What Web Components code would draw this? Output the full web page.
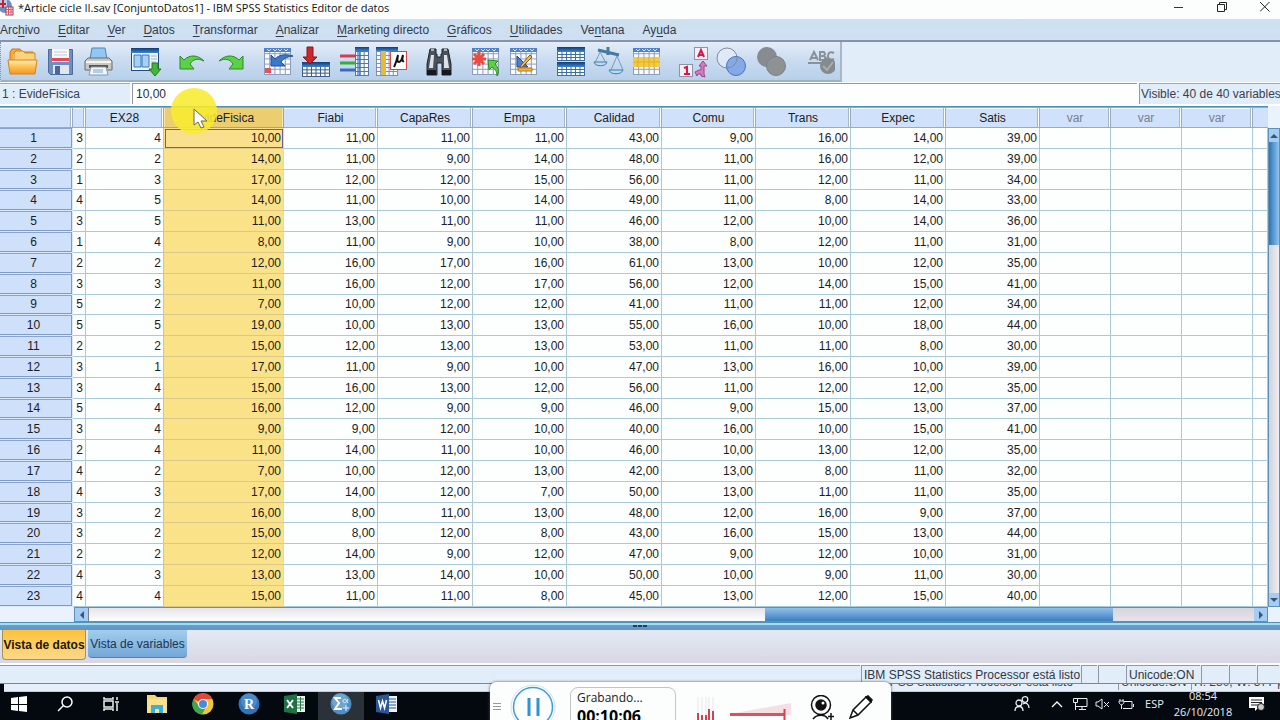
<!DOCTYPE html>
<html lang="es">
<head>
<meta charset="utf-8">
<title>*Article cicle II.sav [ConjuntoDatos1] - IBM SPSS Statistics Editor de datos</title>
<style>
html,body{height:100%;margin:0}
body{overflow:hidden;background:#fcfefd;color:#1a1d24;font:12px/16px "Liberation Sans",Arial,sans-serif}
</style>
</head>
<body>
<spss-window></spss-window>
<script>
const RESET = `*{box-sizing:border-box}button,input{font:inherit;color:inherit;margin:0;padding:0;border:0;background:none}svg{display:block}`;
function define(name, css, html, init) {
  customElements.define(name, class extends HTMLElement {
    constructor() {
      super();
      const root = this.attachShadow({mode: 'open'});
      root.innerHTML = `<style>${RESET}${css}</style>${typeof html === 'function' ? html(this) : html}`;
      if (init) init(root, this);
    }
  });
}

/* ---------- title bar ---------- */
define('title-bar', `
:host{display:flex;align-items:center;height:19px;background:#fcfefd;font:11px/16px "Open Sans","Noto Sans",sans-serif;color:#111}
h1{flex:1;margin:0;padding:0 0 3px 4px;font:inherit;white-space:nowrap}
.logo{width:14px;height:19px}
button{width:43px;height:16px;display:grid;place-items:center;margin-bottom:5px}
nav{display:flex;margin-right:-6px}`, `
<svg class="logo" viewBox="0 0 14 19"><circle cx="5" cy="6" r="7" fill="#6d8fc0"/><path d="M0 0h7v7H0z" fill="#b9c8e2"/><path d="M0 4h6M3 0v8" stroke="#c4213d" stroke-width="2"/><rect x="6" y="7" width="7" height="8" fill="#fff" stroke="#b0304a"/><path d="M6 9.500h7M6 12h7M8.500 7v8M11 7v8" stroke="#d0556b"/></svg>
<h1>*Article cicle II.sav [ConjuntoDatos1] - IBM SPSS Statistics Editor de datos</h1>
<nav>
<button aria-label="Minimizar"><svg width="10" height="10"><path d="M0 5.500h9" stroke="#333"/></svg></button>
<button aria-label="Restaurar"><svg width="10" height="10" fill="none" stroke="#222"><path d="M.5 2.500h7v7h-7zM2.500 2.500v-2h7v7h-2"/></svg></button>
<button aria-label="Cerrar"><svg width="10" height="10"><path d="M0 0l9.500 9.500M9.500 0L0 9.500" stroke="#222"/></svg></button>
</nav>`);

/* ---------- menu bar ---------- */
define('menu-bar', `
:host{display:flex;height:23px;align-items:center;gap:18px;padding-left:0;background:linear-gradient(#cde1ee,#cfdff4);border-bottom:2px solid #8594a8;color:#333c4a}
u{text-decoration-thickness:1px;text-underline-offset:2px}
button{white-space:nowrap}`,
 ['Arc<u>h</u>ivo','<u>E</u>ditar','<u>V</u>er','<u>D</u>atos','<u>T</u>ransformar','<u>A</u>nalizar','<u>M</u>arketing directo','<u>G</u>ráficos','<u>U</u>tilidades','Ve<u>n</u>tana','Ay<u>u</u>da'].map(t=>`<button>${t}</button>`).join(''));

/* ---------- toolbar ---------- */
const gridLines = (x,y,w,h,nx,ny,c='#9aa8c4') => {
  let d='';
  for(let i=1;i<nx;i++) d+=`M${x+w*i/nx} ${y}v${h}`;
  for(let i=1;i<ny;i++) d+=`M${x} ${y+h*i/ny}h${w}`;
  return `<rect x="${x}" y="${y}" width="${w}" height="${h}" fill="#f8fbff" stroke="${c}"/><path d="${d}" stroke="${c}" fill="none"/>`;
};
const sheet = gridLines(2.5,2.5,26,26,5,5,'#8f9dbd') + `<path d="M2 2h27v4H2z" fill="#4f80d0"/><path d="M5 3l2 2 2-2M11 3l2 2 2-2M16 3l2 2 2-2M22 3l2 2 2-2" stroke="#dbe9ff" fill="none"/>`;
const band = (x,y,w,h) => `<rect x="${x}" y="${y}" width="${w}" height="${h}" fill="url(#navy)"/>`;
const ICONS = {
 Abrir:`<path d="M3 6l2-3h8l2 3h11v19H3z" fill="#f3a83b" stroke="#c9791b"/><path d="M6 8h21v8H6z" fill="#fff2c8"/><path d="M7 7l2-2h7l2 2h10v8H7z" fill="#fdd27a" stroke="#d18a2b"/><path d="M1 14h29l-2 14H3z" fill="url(#gold)" stroke="#d9821c"/>`,
 Guardar:`<path d="M3.500 3.500h24v25h-22l-2-2z" fill="#6f8fc0" stroke="#4d6a9b"/><path d="M7 3h17v13H7z" fill="#f6f8fb"/><path d="M7 12h17v3H7z" fill="#e14860"/><path d="M9 6h13M9 9h13" stroke="#c3cbd8"/><path d="M8 19h16v9H8z" fill="#dfe7f0"/><path d="M10 20h5v8h-5z" fill="#46689c"/>`,
 Imprimir:`<path d="M9 2h13l2 11H7z" fill="#8fc8f2" stroke="#5583b5"/><path d="M5 12h21l3 3v9H2v-9z" fill="#c8c8c4" stroke="#6b6b68"/><path d="M3 15h25v2H3z" fill="#f5f5f1"/><path d="M6 19h19v3H6z" fill="#55554f"/><path d="M8 21h15l2 8H6z" fill="#f3f7fb" stroke="#8b98a6"/><path d="M10 24h10M10 26h10" stroke="#6ba6dd"/>`,
 Recuperar:`<rect x="1.500" y="2.500" width="27" height="22" fill="#f1f7fe" stroke="#234a80"/>${band(1,2,28,5)}<path d="M4 9h7v12H4zM12 9h7v12h-7z" fill="#a6d0f4" stroke="#3a78b8"/><path d="M21 10h6M21 13h6M21 16h5" stroke="#9db6d0"/><path d="M22 17h6v6h3l-6 7-6-7h3z" fill="#45b537" stroke="#23791c"/>`,
 Deshacer:`<path d="M3 10l4 4c6-6 14-5 20 1-6-3-11-2-14 3l4 5H3z" fill="#5cd048" stroke="#2b8a24"/>`,
 Rehacer:`<path d="M28 10l-4 4C18 8 10 9 4 15c6-3 11-2 14 3l-4 5h14z" fill="#5cd048" stroke="#2b8a24"/>`,
 'Ir a caso':`${sheet}<path d="M3 22h6v5H3z" fill="#e0525f"/><path d="M9 9l4 4c5-5 11-5 18-3-7 1-10 3-12 6l4 4H9z" fill="#3a78c8" stroke="#205398"/>`,
 'Ir a variable':`${gridLines(2.500,20.500,27,10,6,3,'#3f5d86')}${band(2,16,28,5)}<path d="M7 1h6v10h4l-7 7-7-7h4z" fill="#c6282c" stroke="#8d1418"/>`,
 Variables:`${gridLines(17.500,1.500,13,28,3,7,'#5a789f')}${band(17,1,14,4)}<path d="M19 5h4v24h-4z" fill="#3577bd" opacity=".6"/><path d="M2 10h16" stroke="#d63b54" stroke-width="3"/><path d="M2 17h16" stroke="#36ad3c" stroke-width="3"/><path d="M2 24h16" stroke="#3f66d0" stroke-width="3"/>`,
 Estadísticos:`${gridLines(.5,1.500,21,28,5,7,'#7d90ad')}${band(0,1,22,4)}<path d="M5 5h5v24H5z" fill="#e6b93f"/><rect x="14.500" y="5.500" width="16" height="18" fill="#fff" stroke="#d2493f"/><path d="M18 21c2-4 3-8 4-12-1 5-1 7 1 7s3-3 4-7c-1 5-1 7 1 6" stroke="#111" stroke-width="2" fill="none"/>`,
 Buscar:`<path d="M7 3h6v5h1v3h4V8h1V3h6l3 15v11h-9V17h-5v12H4V18z" fill="#4a525c" stroke="#20252b"/><path d="M8 9h3l-1 13H6zM21 9h3l2 13h-5z" fill="#dce2e8"/><path d="M4 24h9v5H4zM19 24h9v5h-9z" fill="#15181c"/><path d="M8 4h3M21 4h3" stroke="#aab4be" stroke-width="2"/>`,
 'Insertar caso':`${sheet}<path d="M9 6v14M2 13h14M4 8l10 10M14 8L4 18" stroke="#ea4c44" stroke-width="3"/><path d="M18 14l10 1-3 3c4 4 4 8 2 12 0-5-2-7-5-9l-3 3z" fill="#5cd048" stroke="#2b8a24"/>`,
 'Insertar variable':`${sheet}<path d="M9 10l11 11H9z" fill="#4c7fd0" stroke="#244a94"/><path d="M24 11L14 21l-2 1 1-3 9-10z" fill="#f1bd4c" stroke="#8a5a20"/><path d="M10 22h14v3H10z" fill="#f3b53a" stroke="#b77818"/>`,
 'Segmentar archivo':`${gridLines(2.500,5.500,27,9,6,3,'#3f6f9c')}${band(2,1,28,5)}${gridLines(2.500,20.500,27,9,6,3,'#3f6f9c')}${band(2,16,28,5)}`,
 Ponderar:`<path d="M5 4l21 5M15 1v8" stroke="#45799f" stroke-width="3"/><path d="M7 6L2 17M7 6l6 11M24 10l-6 14M24 10l6 14" stroke="#6f9fc0" fill="none"/><path d="M1 16h13c-1 5-12 5-13 0zM16 24h14c-1 5-13 5-14 0z" fill="#b6dcf5" stroke="#427ca8"/>`,
 Seleccionar:`${sheet}<path d="M2 11h27v10H2z" fill="#f2cb42"/><path d="M2 16h27M7 11v10M13 11v10M18 11v10M23 11v10" stroke="#dcae2b"/>`,
 Etiquetas:`<rect x="16.500" y="1.500" width="13" height="12" fill="#f5eef4" stroke="#8d93a8"/><path d="M20 11l3-7 3 7M21 9h4" stroke="#d11a4e" stroke-width="2" fill="none"/><rect x="1.500" y="18.500" width="13" height="12" fill="#f5eef4" stroke="#8d93a8"/><path d="M6 22l3-1v7M6 28h6" stroke="#d11a4e" stroke-width="2" fill="none"/><path d="M25 15l4 5h-3v8l1 3-4-1v-2h-3l-1 2-2-4 4-2h2v-4h-2z" fill="#d77bbd" stroke="#a04387"/>`,
 Conjuntos:`<circle cx="11" cy="12" r="10" fill="#e6eef8" fill-opacity=".7" stroke="#7d8ba3"/><circle cx="20" cy="20" r="9.500" fill="#85a9e6" stroke="#4a72c0"/><path d="M11 22a10 10 0 0 0 10-10" stroke="#7d8ba3" fill="none"/>`,
 'Todas las variables':`<circle cx="13" cy="11" r="10" fill="#878c90"/><circle cx="22" cy="20" r="9.500" fill="#8e9294" stroke="#7b8084"/>`,
 Ortografía:`<g fill="none" stroke="#8b9198" stroke-width="2"><path d="M7 14l4-8 4 8M8 12h6M17 14V6h4l1 2-1 2h-4 4l2 2-2 2zM31 7c-4-2-6 0-6 3s2 5 6 3M5 17h14"/></g><circle cx="25" cy="20" r="8" fill="#858a8e"/><path d="M20 20l4 4 6-8" stroke="#a9adb0" stroke-width="2" fill="none"/>`
};
const GROUPS = [['Abrir','Guardar','Imprimir'],['Recuperar'],['Deshacer','Rehacer'],['Ir a caso','Ir a variable','Variables','Estadísticos'],['Buscar'],['Insertar caso','Insertar variable'],['Segmentar archivo','Ponderar','Seleccionar'],['Etiquetas','Conjuntos','Todas las variables'],['Ortografía']];
const DEFS = `<defs><linearGradient id="navy" x2="0" y2="1"><stop stop-color="#123a78"/><stop offset="1" stop-color="#3d86cc"/></linearGradient><linearGradient id="gold" x2="0" y2="1"><stop stop-color="#fff0b8"/><stop offset=".5" stop-color="#fdc04e"/><stop offset="1" stop-color="#f79425"/></linearGradient></defs>`;
define('tool-bar', `
:host{display:flex;height:41px;background:#e2edfa;border-bottom:1px solid #fcfefd}
.strip{display:flex;gap:9px;padding:2px 4px 0 3px;align-items:center;border-right:2px solid #a8b6c8;border-bottom:2px solid #9cb0c8;border-left:1px dotted #7d93b0;background:linear-gradient(#e4edf8,#c9dbf0 50%,#b7d0ea)}
.group{display:flex}
.group:last-child{padding-left:3px}
.group:last-child button{width:35px}
button{width:38px;height:34px;display:grid;place-items:center}`,
 `<div class="strip">${GROUPS.map(g=>`<div class="group">${g.map(n=>`<button aria-label="${n}"><svg width="32" height="32" viewBox="0 0 32 32">${DEFS}${ICONS[n]}</svg></button>`).join('')}</div>`).join('')}</div>`);

/* ---------- cell editor ---------- */
define('cell-editor', `
:host{display:flex;height:23px;background:#fcfefd;gap:2px;padding-bottom:2px}
label,output{display:flex;align-items:center;background:#e2edfa;border-top:1px solid #9aa9bb;padding-left:2px;white-space:nowrap;color:#39414d}
label{width:130px}
input{flex:1;min-width:0;background:#fdfefe;border:solid #8c9bae;border-width:1px 0 0 1px;padding-left:3px;color:#2a2f38}
output{width:141px;border-left:1px solid #8c9bae;padding-left:1px}`, `
<label for="v">1 : EvideFisica</label><input id="v" value="10,00"><output>Visible: 40 de 40 variables</output>`);

/* ---------- data grid ---------- */
const COLS = [['',13],['EX28',78],['EvideFisica',120],['Fiabi',94],['CapaRes',95],['Empa',94],['Calidad',95],['Comu',94],['Trans',95],['Expec',95],['Satis',94],['var',71],['var',71],['var',71]];
const ROWS = `3 4 10 11 11 11 43 9 16 14 39
2 2 14 11 9 14 48 11 16 12 39
1 3 17 12 12 15 56 11 12 11 34
4 5 14 11 10 14 49 11 8 14 33
3 5 11 13 11 11 46 12 10 14 36
1 4 8 11 9 10 38 8 12 11 31
2 2 12 16 17 16 61 13 10 12 35
3 3 11 16 12 17 56 12 14 15 41
5 2 7 10 12 12 41 11 11 12 34
5 5 19 10 13 13 55 16 10 18 44
2 2 15 12 13 13 53 11 11 8 30
3 1 17 11 9 10 47 13 16 10 39
3 4 15 16 13 12 56 11 12 12 35
5 4 16 12 9 9 46 9 15 13 37
3 4 9 9 12 10 40 16 10 15 41
2 4 11 14 11 10 46 10 13 12 35
4 2 7 10 12 13 42 13 8 11 32
4 3 17 14 12 7 50 13 11 11 35
3 2 16 8 11 13 48 12 16 9 37
3 2 15 8 12 8 43 16 15 13 44
2 2 12 14 9 12 47 9 12 10 31
4 3 13 13 14 10 50 10 9 11 30
4 4 15 11 11 8 45 13 12 15 40`.split('\n').map(r=>r.split(' '));
define('data-grid', `
:host{display:block;min-height:0;border-top:1px solid #4f8fb0;background:#fdfefe}
table{width:100%;height:100%;table-layout:fixed;border-collapse:separate;border-spacing:0}
th,td{padding:0;font-weight:normal;overflow:hidden;white-space:nowrap;line-height:16px}
thead th{height:21px;padding-top:1px;background:#cfe1fb;border:solid #9aabb9;border-width:1px 1px 1px 0;box-shadow:inset -1px 0 #fff,inset -2px 0 #a9b8c6,inset 0 1px #f3f8fe}
thead th:last-child{border-right:0;box-shadow:none}
thead th.var{color:#77828f}
thead th.sel{background:#eccd70;border-color:#bda25a;box-shadow:inset 1px 0 #f8e7ab,inset -1px 0 #f8e7ab}
td{text-align:right;padding-right:2px;border:solid #a9cbd9;border-width:0 1px 1px 0}
tbody th{background:#cfe0fb;border:solid #dbe8f6;border-width:0 1px 1px 0;padding-right:5px;box-shadow:inset -1px -1px #7f9bc6,inset 0 1px #8aa5cd}
td.sel{background:#fae288;border-bottom-color:#dcc988;border-right-color:#eed98d}
td.cur{outline:1px solid #6c5da8;outline-offset:-2px;background:#fadf8c}`,
 `<table><colgroup><col style="width:73px">${COLS.map(c=>`<col style="width:${c[1]}px">`).join('')}<col></colgroup>
<thead><tr><th></th>${COLS.map(c=>`<th class="${c[0]==='var'?'var':c[0]==='EvideFisica'?'sel':''}">${c[0]}</th>`).join('')}<th></th></tr></thead>
<tbody>${ROWS.map((r,i)=>`<tr><th>${i+1}</th>${r.map((v,j)=>`<td class="${j===2?(i?'sel':'sel cur'):''}">${j>1?v+',00':v}</td>`).join('')}<td></td><td></td><td></td><td></td></tr>`).join('')}</tbody></table>`);

/* ---------- scroll bars: before / thumb / after are flex weights ---------- */
const arrow = d => `<svg width="8" height="8" viewBox="0 0 8 8"><path d="${d}" fill="#3f5468"/></svg>`;
define('scroll-bar', `
:host{display:flex;background:#e9e8ee;border:1px solid #5e8fb5}
:host([vertical]){flex-direction:column}
button{flex:none;width:13px;height:13px;display:grid;place-items:center;background:#a3cdf5;overflow:hidden}
:host([vertical]) button{width:100%}
.a{background:linear-gradient(#e6e4ec,#fdfefe);border-left:1px solid #777e88}.b{background:linear-gradient(#8fc0ea,#3e7fc0)}.c{background:linear-gradient(#d6d6de,#e6e2e8)}
:host([vertical]) .a{border:0}
:host([vertical]) .b{background:linear-gradient(90deg,#2f74b5,#8fc4ee)}
:host([vertical]) .c{background:linear-gradient(90deg,#cfd3de,#efedf2)}`,
 el => {
  const [a,b,c] = (el.getAttribute('parts')||'1 1 1').split(' '), v = el.hasAttribute('vertical');
  return `<button aria-label="${v?'Arriba':'Izquierda'}">${arrow(v?'M0 6h8L4 2z':'M6 0v8L2 4z')}</button><div class="a" style="flex:${a} 0 0"></div><div class="b" style="flex:${b} 0 0"></div><div class="c" style="flex:${c} 0 0"></div><button aria-label="${v?'Abajo':'Derecha'}">${arrow(v?'M0 2h8L4 6z':'M2 0v8l4-4z')}</button>`;
 });

/* ---------- view tabs ---------- */
define('view-tabs', `
:host{display:block;background:linear-gradient(#e5effa,#d8d7e3);border-bottom:2px solid #fcfefd}
.split{height:8px;display:grid;place-items:center;background:linear-gradient(#4f93bb 0 1px,#a6dbea 1px 3px,#5fa2d0 3px 4px,#5e9bd0 4px 6px,#6a94c4 6px)}
.tabs{display:flex;gap:2px;height:33px;padding-left:2px;align-items:flex-start}
button{white-space:nowrap;border-radius:0 0 4px 4px;color:#20344f}
.on{width:84px;height:30px;font-weight:bold;background:linear-gradient(#fdc23a,#fbd98a);border:solid #9d9360;border-width:0 1px 1px 1px;color:#1f1708}
.off{width:99px;height:28px;background:linear-gradient(#a2cdec,#74a7d8);border-bottom:1px solid #5482b0}`, `
<div class="split"><svg width="14" height="4" viewBox="0 0 14 4"><path d="M0 2h4M5 2h4M10 2h4" stroke="#1d3f66" stroke-width="2"/></svg></div>
<div class="tabs"><button class="on">Vista de datos</button><button class="off">Vista de variables</button></div>`);

/* ---------- status bar ---------- */
define('status-bar', `
:host{display:block;background:#05080e}
.row{display:flex;height:19px;background:#e2edfa;border-bottom:1px solid #7d8793;color:#2f3743}
.row span{border:solid #8c98a8;border-width:1px 0 0 1px;margin-right:1px;padding:1px 0 0 2px;white-space:nowrap;overflow:hidden}
.row .fill{flex:1;border-left:0}
.echo{display:flex;justify-content:flex-end;align-items:flex-end;height:8px;margin-left:4px;padding-bottom:1px;overflow:hidden;background:#e6eef9;border-bottom:1px solid #c4ccd6;color:#3a424e}
.echo span{flex:none;white-space:nowrap;border-left:1px solid #8c98a8;padding-left:2px}`, `
<div class="row"><span class="fill"></span><span style="width:219px">IBM SPSS Statistics Processor está listo</span><span style="width:16px"></span><span style="width:27px"></span><span style="width:74px">Unicode:ON</span><span style="width:27px"></span><span style="width:27px"></span><span style="width:22px"></span></div>
<div class="echo" aria-hidden="true"><span style="width:220px">IBM SPSS Statistics Processor está listo</span><span style="width:16px"></span><span style="width:28px"></span><span style="width:73px">Unicode:ON</span><span style="width:89px">H: 280, W: 377 p</span></div>`);

/* ---------- taskbar ---------- */
define('task-bar', `
:host{display:flex;height:28px;background:#04080f;color:#e9edf2;font:11px/16px "Open Sans","Noto Sans",sans-serif;overflow:hidden}
button{width:46px;height:28px;display:grid;place-items:center;padding-bottom:4px}
.first{width:42px;padding-right:4px}
.active{background:#2b3139}
.sp{flex:1}
.tray{display:flex;align-items:flex-start}
.tray button{width:23px}
.tray .wide{width:46px}
.lang{width:35px;height:24px;display:grid;place-items:center}
time{width:62px;text-align:center;margin-top:-4px}
time div{height:16px}`, `
<button class="first" aria-label="Inicio"><svg width="16" height="16" fill="#fff"><path d="M0 2l7-1v7H0zM8 1l8-1v8H8zM0 9h7v6l-7-1zM8 9h8v7l-8-1z"/></svg></button>
<button aria-label="Buscar"><svg width="16" height="16" fill="none" stroke="#fff" stroke-width="1.500"><circle cx="10" cy="6" r="5"/><path d="M6.500 9.500L1 15"/></svg></button>
<button aria-label="Vista de tareas"><svg width="16" height="16" fill="none" stroke="#eee" stroke-width="1.500"><path d="M1 1v2h9V1M1 15v-2h9v2M1 5h9v6H1zM14 1v3M14 7v8M12 6h4"/></svg></button>
<button aria-label="Explorador"><svg width="22" height="20"><path d="M1 1h8l2 2h10v16H1z" fill="#f7d673"/><path d="M1 5h20v14H1z" fill="#fbe08b"/><path d="M5 19v-8h12v8h-4v-4H9v4z" fill="#3cb0dc"/></svg></button>
<button aria-label="Chrome"><svg width="22" height="22" viewBox="0 0 22 22"><circle cx="11" cy="11" r="10.500" fill="#f3c732"/><path d="M11 11L1.500 6A10.500 10.500 0 0 1 20.500 6z" fill="#e0483a"/><path d="M1.500 6A10.500 10.500 0 0 0 10 21.500L14 14 7 13z" fill="#3fa552"/><path d="M11 6h9.500L14 14z" fill="#f3c732"/><circle cx="11" cy="11" r="5" fill="#fff"/><circle cx="11" cy="11" r="4" fill="#4a86e8"/></svg></button>
<button aria-label="R"><svg width="22" height="22"><circle cx="11" cy="11" r="10.500" fill="#2f73b8"/><circle cx="11" cy="8" r="8" fill="#5b9bd8" opacity=".6"/><text x="11" y="16" text-anchor="middle" font-family="Liberation Serif" font-weight="bold" font-size="14" fill="#fff">R</text></svg></button>
<button aria-label="Excel"><svg width="22" height="20"><path d="M11 2h10v16H11z" fill="#e9f2ec"/><path d="M13 5h7M13 8h7M13 11h7M13 14h7M16.500 3v14" stroke="#2c7a4b"/><path d="M0 2l13-2v20L0 18z" fill="#1f7244"/><path d="M3 6l6 8M9 6l-6 8" stroke="#fff" stroke-width="2"/></svg></button>
<button class="active" aria-label="SPSS"><svg width="22" height="22"><circle cx="11" cy="11" r="10.500" fill="#4f8fc4"/><circle cx="10" cy="8" r="8" fill="#8dbde0" opacity=".5"/><path d="M11 5H5l4 5-4 6h7" stroke="#fff" stroke-width="2" fill="none"/><path d="M18 6c-2 5-5 4-5 2s3-3 5 2M13 15h6M16 12v6" stroke="#e6f2fc" fill="none"/></svg></button>
<button aria-label="Word"><svg width="22" height="20"><path d="M11 2h10v16H11z" fill="#eef3fa"/><path d="M13 5h7M13 8h7M13 11h7M13 14h7" stroke="#2b579a"/><path d="M0 2l13-2v20L0 18z" fill="#2b579a"/><path d="M2.500 6l2 8 2-7 2 7 2-8" stroke="#fff" stroke-width="1.500" fill="none"/></svg></button>
<span class="sp"></span>
<div class="tray">
<button class="wide" aria-label="Contactos"><svg width="16" height="16" fill="none" stroke="#e9edf2" stroke-width="1.300"><circle cx="5" cy="7" r="3"/><path d="M1 15c0-6 8-6 8 0"/><circle cx="11" cy="3.500" r="2.800"/><path d="M9 8c3-2 6 0 6 4"/></svg></button>
<button aria-label="Iconos ocultos"><svg width="12" height="8" fill="none" stroke="#fff" stroke-width="1.300"><path d="M1 7l5-5 5 5"/></svg></button>
<button aria-label="Red"><svg width="16" height="14" fill="none" stroke="#e9edf2"><path d="M4 1.500h11v8H4M1.500 1.500h4v4h-4zM3.500 6v7M7 12.500h7M10 10v2"/></svg></button>
<button aria-label="Volumen"><svg width="15" height="12" fill="none" stroke="#e9edf2"><path d="M1 4h2l4-3v10L3 8H1zM9 4l5 5M14 4L9 9"/></svg></button>
<button aria-label="Batería"><svg width="16" height="12" fill="none" stroke="#e9edf2"><path d="M6 3.500h8v7H5M15.500 6v3M1 3h5M2 1v2M5 1v2M1 3c0 5 5 5 5 0M3.500 7v4"/></svg></button>
<span class="lang">ESP</span>
<time><div>08:54</div><div>26/10/2018</div></time>
<button class="wide" aria-label="Notificaciones"><svg width="16" height="16"><path d="M0 1h15v11H9l-3 3v-3H0z" fill="#fff"/><path d="M2 4h11M2 6.500h11M2 9h7" stroke="#222"/><circle cx="12" cy="11" r="3.500" fill="#ccc" stroke="#111"/></svg></button>
</div>`);

/* ---------- floating recorder ---------- */
define('screen-recorder', `
:host{display:flex;width:401px;height:44px;padding:5px 0 0 3px;background:#fcfdfd;border-radius:6px;box-shadow:0 0 3px #555;color:#222;font:12px/18px "Open Sans","Noto Sans",sans-serif;align-items:flex-start}
button{flex:none}
.grip{margin:16px 9px 0 0}.pause{margin-right:14px;margin-top:-4px}
section{width:106px;height:50px;border:1px solid #c4c4c8;border-radius:8px;padding:1px 0 0 6px}
strong{display:block;font-size:16px;line-height:18px;color:#000}
.lvl{margin-left:20px;margin-top:10px}.vol{margin-left:16px;margin-top:14px}.cam{margin-left:18px;margin-top:8px}.pen{margin-left:14px;margin-top:8px}`, `
<svg class="grip" width="8" height="8"><path d="M0 .5h8M0 3.500h8M0 6.500h8" stroke="#999"/></svg>
<button class="pause" aria-label="Pausa"><svg width="46" height="46" viewBox="0 0 46 46" fill="none"><circle cx="23" cy="24" r="22" stroke="#d3e3ee"/><circle cx="23" cy="24" r="19.500" stroke="#3d9fd6" stroke-width="1.500"/><path d="M19 15v18M28 15v18" stroke="#2f93cf" stroke-width="3"/></svg></button>
<section><div>Grabando...</div><strong>00:10:06</strong></section>
<svg class="lvl" width="18" height="24"><path d="M2 0v24M6 0v24M10 0v24M13 0v24M17 0v24" stroke="#eae6e8"/><path d="M2 16v8M6 18v6M10 18v6M13 12v12M17 14v10" stroke="#d8404e" stroke-width="2"/></svg>
<svg class="vol" width="61" height="20"><path d="M0 13L61 2v12H0z" fill="#f6dfe2"/><path d="M0 13.500h55" stroke="#dc5260" stroke-width="3"/><path d="M54.500 8v11" stroke="#d8404e" stroke-width="2"/></svg>
<button class="cam" aria-label="Cámara"><svg width="26" height="26" fill="none" stroke="#111" stroke-width="1.500"><circle cx="12" cy="10" r="9.500"/><circle cx="12" cy="10" r="5" fill="#111"/><circle cx="14" cy="8" r="1.500" fill="#fff" stroke="none"/><path d="M4 24c4-5 12-5 15 0M22 18v7M19 21.500h6"/></svg></button>
<button class="pen" aria-label="Lápiz"><svg width="24" height="24" fill="#fff" stroke="#111" stroke-width="1.500"><path d="M1 23l3-8L17 2l5 5L9 20zM4 15l5 5"/><path d="M17 2l5 5 1-2-4-4z" fill="#111"/></svg></button>`);

/* ---------- pointer with highlight ---------- */
define('pointer-mark', `:host{display:block;pointer-events:none}`, `
<svg width="48" height="48" viewBox="0 0 48 48"><circle cx="24" cy="24" r="23" fill="#f8ec30" opacity=".88"/><path d="M24 22v16l4-3 3 6 3-1-3-6h6z" fill="#fff" stroke="#6c6a5a"/></svg>`);

/* ---------- window ---------- */
define('spss-window', `
:host{display:flex;flex-direction:column;height:100vh;position:relative;overflow:hidden}
title-bar,menu-bar,tool-bar,cell-editor,view-tabs,status-bar,task-bar{flex:none}
main{flex:1;min-height:0;display:grid;grid-template-columns:1fr 12px;grid-template-rows:1fr 15px;background:#e9f2fd}
.v{margin-top:22px}
.h{margin-left:74px}
screen-recorder{position:absolute;left:490px;bottom:-6px}
pointer-mark{position:absolute;left:170px;top:87px}`, `
<title-bar></title-bar><menu-bar></menu-bar><tool-bar></tool-bar><cell-editor></cell-editor>
<main><data-grid></data-grid><scroll-bar class="v" vertical parts="0 103 348"></scroll-bar><scroll-bar class="h" parts="677 348 141"></scroll-bar></main>
<view-tabs></view-tabs><status-bar></status-bar><task-bar></task-bar>
<screen-recorder></screen-recorder><pointer-mark></pointer-mark>`);
</script>
</body>
</html>
